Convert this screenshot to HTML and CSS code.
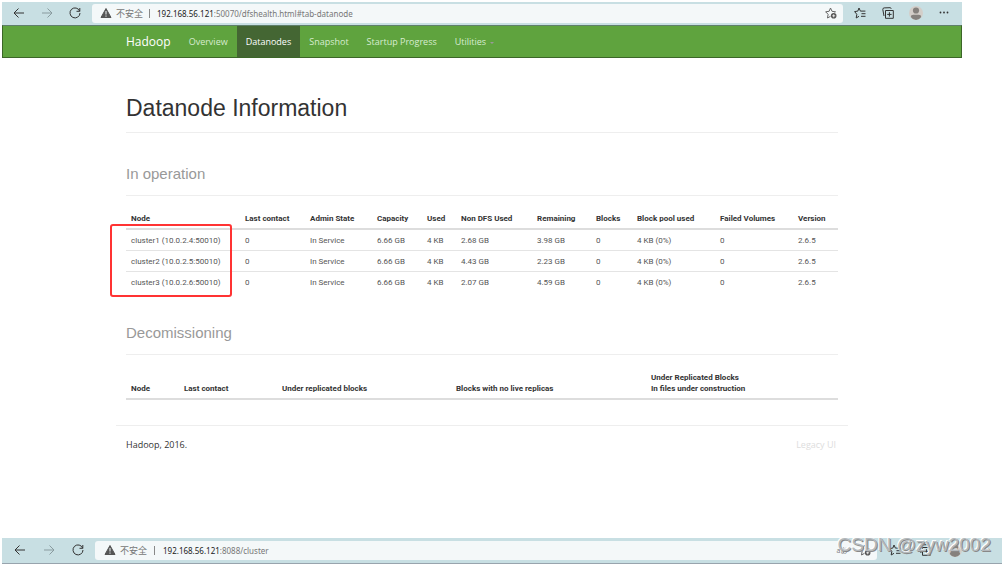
FILE: index.html
```html
<!DOCTYPE html>
<html lang="en">
<head>
<meta charset="utf-8">
<title>Namenode information</title>
<link rel="stylesheet" href="styles.css">
</head>
<body>
<svg class="sprite" aria-hidden="true">
  <symbol id="back" viewBox="0 0 12 12"><path d="M11 6H1M5.500 1.500 1 6l4.500 4.500"/></symbol>
  <symbol id="forward" viewBox="0 0 12 12"><path d="M1 6h10M6.500 1.500 11 6l-4.500 4.500"/></symbol>
  <symbol id="reload" viewBox="0 0 12 12"><path d="M10.700 4.200A5 5 0 1 0 11 6M10.800 1v3.300H7.500"/></symbol>
  <symbol id="warn" viewBox="0 0 12 12"><path d="M6 1.500 11 10.500H1Z" fill="#555" stroke="#555" stroke-linejoin="round"/><path d="M6 4v3.500M6 8.500v1.200" stroke="#f4f8f9"/></symbol>
  <symbol id="staradd" viewBox="0 0 12 12"><path d="M5.500 9.300 2.500 11l.6-3.700L.600 4.800l3.500-.5L5.500 1l1.500 3.300 3.500.5-1 .9"/><circle cx="8.700" cy="8.800" r="2.800" fill="#555" stroke="none"/><path d="M8.700 7.300v3M7.200 8.800h3" stroke="#fff" stroke-width=".8"/></symbol>
  <symbol id="favs" viewBox="0 0 12 12"><path d="M5 9.300 2.200 11l.6-3.700L.600 4.600l3.200-.5L5 1l1.400 3.100h5M7.500 6.700h4M7 9.300h4.500"/></symbol>
  <symbol id="collect" viewBox="0 0 12 12"><path d="M3.500 3.500h7.800v7.800H3.500ZM7.400 5.200v4.400M5.200 7.400h4.400M2 9 .800 2.500Q.700 1 2.200.900L8 .700q1 0 1.200 1"/></symbol>
  <symbol id="person" viewBox="0 0 14 14"><circle cx="7" cy="7" r="7" fill="#d3cec9" stroke="none"/><circle cx="7" cy="4.500" r="3.100" fill="#85817d" stroke="none"/><path d="M1.800 11q0-2.200 2.400-2.200h5.600q2.400 0 2.400 2.200-2 3-5.200 3T1.800 11Z" fill="#85817d" stroke="none"/></symbol>
  <symbol id="dots" viewBox="0 0 12 12"><g fill="#333" stroke="none"><circle cx="2.500" cy="5.500" r=".9"/><circle cx="6" cy="5.500" r=".9"/><circle cx="9.500" cy="5.500" r=".9"/></g></symbol>
</svg>

<div class="window">
  <div class="toolbar">
    <button class="tool" aria-label="Back"><svg class="icon"><use href="#back"/></svg></button>
    <button class="tool faded" aria-label="Forward"><svg class="icon"><use href="#forward"/></svg></button>
    <button class="tool" aria-label="Reload"><svg class="icon"><use href="#reload"/></svg></button>
    <div class="address">
      <svg class="icon"><use href="#warn"/></svg>
      <span class="unsafe">不安全</span><span class="bar"></span>
      <label class="host" for="url1">192.168.56.121</label><input class="path" id="url1" value=":50070/dfshealth.html#tab-datanode">
      <button class="tool soft" aria-label="Add to favorites"><svg class="icon"><use href="#staradd"/></svg></button>
    </div>
    <div class="actions">
      <button class="tool" aria-label="Favorites"><svg class="icon"><use href="#favs"/></svg></button>
      <button class="tool" aria-label="Collections"><svg class="icon"><use href="#collect"/></svg></button>
      <button class="tool" aria-label="Profile"><svg class="avatar"><use href="#person"/></svg></button>
      <button class="tool" aria-label="More"><svg class="icon"><use href="#dots"/></svg></button>
    </div>
  </div>

  <nav class="navbar">
    <a class="brand" href="#">Hadoop</a>
    <a class="link" href="#">Overview</a>
    <a class="link active" href="#">Datanodes</a>
    <a class="link" href="#">Snapshot</a>
    <a class="link" href="#">Startup Progress</a>
    <a class="link" href="#">Utilities<span class="caret"></span></a>
  </nav>

  <main class="container">
    <section class="content">
      <h1 class="title">Datanode Information</h1>
      <h2 class="subtitle">In operation</h2>
      <table class="table">
        <colgroup><col class="w114"><col class="w65"><col class="w67"><col class="w50"><col class="w34"><col class="w76"><col class="w59"><col class="w41"><col class="w83"><col class="w78"><col></colgroup>
        <thead><tr><th>Node</th><th>Last contact</th><th>Admin State</th><th>Capacity</th><th>Used</th><th>Non DFS Used</th><th>Remaining</th><th>Blocks</th><th>Block pool used</th><th>Failed Volumes</th><th>Version</th></tr></thead>
        <tbody>
          <tr><td>cluster1 (10.0.2.4:50010)</td><td>0</td><td>In Service</td><td>6.66 GB</td><td>4 KB</td><td>2.68 GB</td><td>3.98 GB</td><td>0</td><td>4 KB (0%)</td><td>0</td><td>2.6.5</td></tr>
          <tr><td>cluster2 (10.0.2.5:50010)</td><td>0</td><td>In Service</td><td>6.66 GB</td><td>4 KB</td><td>4.43 GB</td><td>2.23 GB</td><td>0</td><td>4 KB (0%)</td><td>0</td><td>2.6.5</td></tr>
          <tr><td>cluster3 (10.0.2.6:50010)</td><td>0</td><td>In Service</td><td>6.66 GB</td><td>4 KB</td><td>2.07 GB</td><td>4.59 GB</td><td>0</td><td>4 KB (0%)</td><td>0</td><td>2.6.5</td></tr>
        </tbody>
      </table>
      <div class="marker"></div>
      <h2 class="subtitle">Decomissioning</h2>
      <table class="table">
        <colgroup><col class="w53"><col class="w98"><col class="w174"><col class="w195"><col></colgroup>
        <thead><tr><th>Node</th><th>Last contact</th><th>Under replicated blocks</th><th>Blocks with no live replicas</th><th>Under Replicated Blocks<br>In files under construction</th></tr></thead>
      </table>
    </section>
    <footer class="footer"><span>Hadoop, 2016.</span><a class="legacy" href="#">Legacy UI</a></footer>
  </main>
</div>

<div class="window second">
  <div class="toolbar">
    <button class="tool" aria-label="Back"><svg class="icon"><use href="#back"/></svg></button>
    <button class="tool faded" aria-label="Forward"><svg class="icon"><use href="#forward"/></svg></button>
    <button class="tool" aria-label="Reload"><svg class="icon"><use href="#reload"/></svg></button>
    <div class="address">
      <svg class="icon"><use href="#warn"/></svg>
      <span class="unsafe">不安全</span><span class="bar"></span>
      <label class="host" for="url2">192.168.56.121</label><input class="path" id="url2" value=":8088/cluster">
      <button class="tool translate" aria-label="Translate">aあ</button>
      <button class="tool soft" aria-label="Add to favorites"><svg class="icon"><use href="#staradd"/></svg></button>
    </div>
    <div class="actions">
      <button class="tool" aria-label="Favorites"><svg class="icon"><use href="#favs"/></svg></button>
      <button class="tool" aria-label="Collections"><svg class="icon"><use href="#collect"/></svg></button>
      <button class="tool" aria-label="Profile"><svg class="avatar"><use href="#person"/></svg></button>
      <button class="tool" aria-label="More"><svg class="icon"><use href="#dots"/></svg></button>
    </div>
  </div>
  <div class="watermark">CSDN @zyw2002</div>
</div>
</body>
</html>
```
FILE: styles.css
```css
* { box-sizing: border-box; }
body {
  margin: 0;
  padding: 2px 3px 0 2px;
  background: #fff;
  color: #333;
  font-family: "Open Sans", "Noto Sans CJK SC", sans-serif;
  font-size: 9px;
}
.sprite { position: absolute; width: 0; height: 0; }
.window { margin-right: 40px; }
.icon, .avatar {
  display: block;
  flex: none;
  width: 12px;
  height: 12px;
  fill: none;
  stroke: currentColor;
}
.avatar { width: 14px; height: 14px; }

.toolbar {
  display: flex;
  align-items: center;
  height: 23px;
  padding: 0 0 1px 11px;
  background: #c8dfe3;
}
.tool {
  display: flex;
  justify-content: center;
  align-items: center;
  width: 28px;
  padding: 0;
  border: 0;
  background: none;
  color: #333;
}
.toolbar > .tool { padding-right: 16px; }
.faded { color: #899b9f; }
.soft { width: 24px; color: #666; }
.address {
  display: flex;
  flex: 1;
  align-items: center;
  height: 19px;
  margin-left: -5px;
  padding-left: 8px;
  border-radius: 3px;
  background: #f4f8f9;
}
.unsafe { margin-left: 4px; color: #777; }
.bar { width: 1px; height: 9px; margin: 0 7px 0 6px; background: #888; }
.host, .path { font-family: "Noto Sans", sans-serif; font-size: 8px; }
.host { color: #222; }
.path {
  flex: 1;
  min-width: 0;
  padding: 0;
  border: 0;
  background: none;
  color: #777;
}
.actions { display: flex; padding: 0 4px 0 3px; }
.translate { width: 22px; color: #777; font-family: inherit; font-size: 7px; }

.navbar {
  display: flex;
  height: 33px;
  padding-left: 114px;
  border: 1px solid #3c6628;
  border-top-color: #5f7f6b;
  background: #5fa33e;
  line-height: 31px;
}
.brand { padding: 0 9px; color: #fff; font-size: 12px; text-decoration: none; }
.link { padding: 0 9px; color: #d8ecd0; text-decoration: none; }
.active { background: #446633; color: #fff; }
.caret {
  display: inline-block;
  margin-left: 4px;
  border: 2px solid transparent;
  border-top-color: #999;
  border-bottom: 0;
  vertical-align: middle;
}

.container { padding: 37px 114px 0; }
.content { position: relative; padding: 0 10px; }
.title, .subtitle {
  margin: 0;
  border-bottom: 1px solid #eee;
  font-family: "Liberation Sans", Arial, sans-serif;
  font-weight: 400;
}
.title { padding-bottom: 10px; font-size: 23px; line-height: 27px; }
.subtitle { padding: 31px 0 12px; color: #999; font-size: 15px; line-height: 19px; }
.table {
  width: 100%;
  margin-top: 12px;
  border-collapse: collapse;
  table-layout: fixed;
  font-family: Roboto, sans-serif;
  font-size: 8px;
  line-height: 11px;
}
.table th {
  padding: 5px 0 4px 5px;
  border-bottom: 2px solid #ddd;
  text-align: left;
  vertical-align: bottom;
  white-space: nowrap;
}
.table td { padding: 5px 0 4px 5px; border-bottom: 1px solid #e4e4e4; color: #555; white-space: nowrap; }
.table tr:last-child td { border-bottom: 0; }
.w114 { width: 114px; }
.w65 { width: 65px; }
.w67 { width: 67px; }
.w50 { width: 50px; }
.w34 { width: 34px; }
.w76 { width: 76px; }
.w59 { width: 59px; }
.w41 { width: 41px; }
.w83 { width: 83px; }
.w78 { width: 78px; }
.w53 { width: 53px; }
.w98 { width: 98px; }
.w174 { width: 174px; }
.w195 { width: 195px; }
.marker {
  position: absolute;
  top: 129px;
  left: -6px;
  width: 122px;
  height: 73px;
  border: 2px solid #f33;
  border-radius: 3px;
}
.footer {
  display: flex;
  justify-content: space-between;
  margin-top: 25px;
  padding: 12px 12px 0 10px;
  border-top: 1px solid #eee;
  line-height: 14px;
}
.legacy { color: #ddd; text-decoration: none; }

.second { position: relative; margin: 86px 0 0; }
.second .toolbar { height: 26px; border-bottom: 1px solid #98a4ad; }
.second .toolbar > .tool { width: 29px; }
.second .address { padding-left: 9px; }
.second .bar { margin: 0 8px 0 7px; }
.second .actions { padding-right: 2px; }
.second .actions .tool { width: 30px; }
.watermark {
  position: absolute;
  top: -4px;
  right: 11px;
  color: #b4b9bc;
  font-family: "Liberation Sans", Arial, sans-serif;
  font-size: 19px;
  line-height: 22px;
  text-shadow: 1px 1px 0 #888, -1px -1px 0 #fff;
}
```
